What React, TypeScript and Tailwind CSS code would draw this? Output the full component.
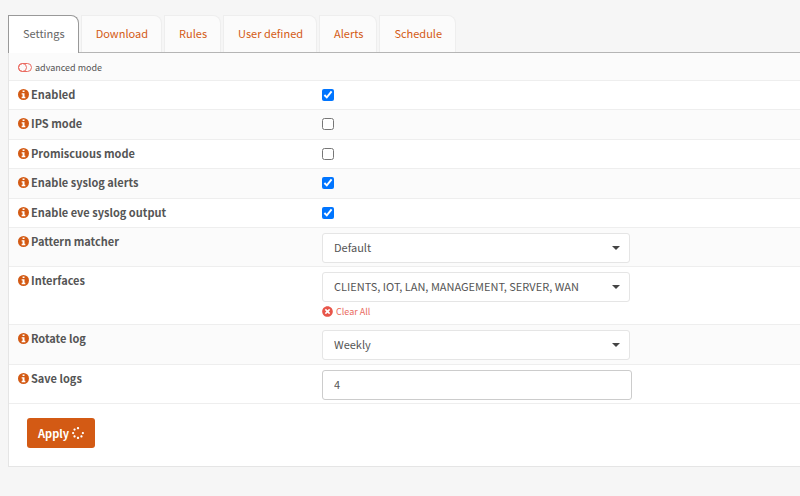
import type { ReactNode } from "react";
import { FaTimesCircle, FaSpinner } from "react-icons/fa";

const tabs = ["Settings", "Download", "Rules", "User defined", "Alerts", "Schedule"];

function InfoIcon() {
  return (
    <svg viewBox="0 0 12 12" className="size-[11px]" aria-hidden="true">
      <circle cx="6" cy="6" r="6" fill="#d35a14" />
      <path fill="#ffffff" d="M5 1.5h2.1v1.9H5zM4 4.5h3.1v4H8V10H4V8.500h1V6H4z" />
    </svg>
  );
}

function Row({ id, label, striped, children }: { id: string; label: string; striped?: boolean; children: ReactNode }) {
  return (
    <tr className={striped ? "border-b border-[#eeeeee] bg-[#fbfbfb]" : "border-b border-[#eeeeee] bg-white"}>
      <td className={striped ? "px-[9px] pt-1 pb-[5px] align-top" : "px-[9px] py-1 align-top"}>
        <div className="flex h-5 items-center gap-[2px] pb-[2px]">
          <InfoIcon />
          <label htmlFor={id} className="text-[11px] leading-4 font-bold text-[#555555]">{label}</label>
        </div>
      </td>
      <td className="px-[9px] align-top">{children}</td>
    </tr>
  );
}

function Check({ id, on }: { id: string; on?: boolean }) {
  return (
    <div className="flex h-7 items-center">
      <input id={id} type="checkbox" defaultChecked={on} className="size-3 accent-[#0075ff]" />
    </div>
  );
}

function Picker({ id, value }: { id: string; value: string }) {
  return (
    <div className="relative w-[308px]">
      <select id={id} className="block h-[30px] w-full appearance-none rounded-[3px] border border-[#e5e5e5] bg-white px-[11px] pb-[2px] text-[11px] leading-5 text-[#555555]">
        <option>{value}</option>
      </select>
      <span className="pointer-events-none absolute top-[13px] right-[10px] border-x-4 border-t-4 border-x-transparent border-t-[#444444]" />
    </div>
  );
}

export default function App() {
  return (
    <div className="min-h-screen bg-[#f6f6f6] pt-[15px] pl-2 font-['Source_Sans_Pro','Noto_Sans_CJK_SC',sans-serif] text-[11px] text-[#555555]">
      <nav className="flex gap-[2px] border-b border-[#b5b5b5]">
        {tabs.map((tab, i) => (
          <button
            key={tab}
            type="button"
            className={
              i === 0
                ? "-mb-px h-[38px] rounded-tr-lg border border-b-0 border-[#999999] bg-white pr-[13px] pb-[3px] pl-[14px] leading-5 text-[#666666]"
                : "h-[37px] rounded-tr-lg border border-b-0 border-[#eeeeee] bg-[#fbfbfb] pr-[13px] pb-[2px] pl-[14px] leading-5 text-[#d35a14]"
            }
          >
            {tab}
          </button>
        ))}
      </nav>
      <main className="border-b border-l border-[#e5e5e5] bg-white">
        <table className="w-full table-fixed border-collapse">
          <colgroup>
            <col className="w-[304px]" />
            <col />
          </colgroup>
          <tbody>
            <tr className="border-b border-[#eeeeee] bg-[#fbfbfb]">
              <td colSpan={2} className="px-[9px] pt-[5px] pb-[3px]">
                <button type="button" className="flex h-[19px] items-center gap-[3px] text-[9px] leading-4">
                  <svg viewBox="0 0 14 10" className="h-[10px] w-[14px]" fill="none" stroke="#ea6a60" aria-hidden="true">
                    <rect x="0.5" y="0.5" width="13" height="8" rx="4" />
                    <circle cx="4.500" cy="4.500" r="4" />
                  </svg>
                  advanced mode
                </button>
              </td>
            </tr>
            <Row id="enabled" label="Enabled"><Check id="enabled" on /></Row>
            <Row id="ips" label="IPS mode" striped><Check id="ips" /></Row>
            <Row id="promisc" label="Promiscuous mode"><Check id="promisc" /></Row>
            <Row id="syslog" label="Enable syslog alerts" striped><Check id="syslog" on /></Row>
            <Row id="eve" label="Enable eve syslog output"><Check id="eve" on /></Row>
            <Row id="pattern" label="Pattern matcher" striped>
              <div className="pt-[5px] pb-[3px]"><Picker id="pattern" value="Default" /></div>
            </Row>
            <Row id="interfaces" label="Interfaces">
              <div className="pt-[5px] pb-[3px]">
                <Picker id="interfaces" value="CLIENTS, IOT, LAN, MANAGEMENT, SERVER, WAN" />
                <a href="#clear" className="flex h-[19px] items-center gap-[3px] text-[9px] leading-4 text-[#ea6a60]">
                  <FaTimesCircle className="size-[11px] text-[#e8554a]" />
                  Clear All
                </a>
              </div>
            </Row>
            <Row id="rotate" label="Rotate log" striped>
              <div className="pt-[5px] pb-1"><Picker id="rotate" value="Weekly" /></div>
            </Row>
            <Row id="save" label="Save logs">
              <div className="pt-[5px] pb-[3px]">
                <input id="save" type="text" defaultValue="4" className="block h-[30px] w-[310px] rounded-[3px] border border-[#cccccc] bg-white px-[11px] pb-[2px] text-[11px] leading-5" />
              </div>
            </Row>
          </tbody>
        </table>
        <div className="px-[18px] pt-[14px] pb-[18px]">
          <button type="button" className="flex h-[30px] items-center gap-[3px] rounded-[3px] bg-[#d35a14] px-[11px] text-[11px] leading-5 font-bold text-white">
            Apply
            <FaSpinner className="size-3" />
          </button>
        </div>
      </main>
    </div>
  );
}
